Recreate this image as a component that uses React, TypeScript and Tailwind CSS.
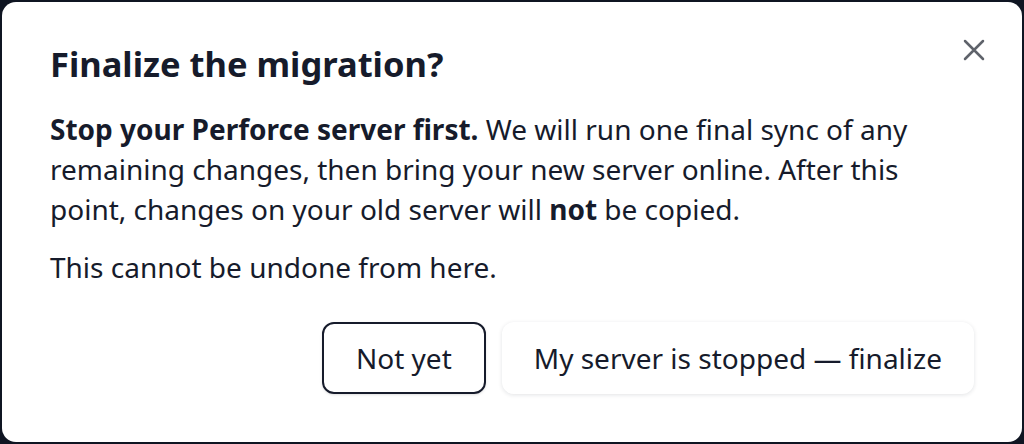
import React from "react";

const CloseIcon = () => (
  <svg width="22" height="22" viewBox="0 0 22 22" fill="none">
    <path
      d="M2 2L20 20M20 2L2 20"
      stroke="currentColor"
      strokeWidth="2.5"
      strokeLinecap="round"
    />
  </svg>
);

export default function App() {
  return (
    <div
      className="w-[1024px] h-[444px] bg-[#0f1522] p-[2px] flex"
      style={{ fontFamily: "'Noto Sans', 'Open Sans', sans-serif" }}
    >
      <div className="relative flex-1 bg-white rounded-[14px] px-[48px] pt-[38px] text-[#161b2b]">
        <button className="absolute top-[37px] right-[37px] text-[#5f636b]">
          <CloseIcon />
        </button>
        <h2 className="text-[34.5px] font-bold leading-[48px]">
          Finalize the migration?
        </h2>
        <p className="mt-[21px] text-[28px] leading-[40px]">
          <strong className="font-bold">Stop your Perforce server first.</strong>{" "}
          We will run one final sync of any remaining changes, then bring your
          new server online. After this point, changes on your old server will{" "}
          <strong className="font-bold">not</strong> be copied.
        </p>
        <p className="mt-[18px] text-[28px] leading-[40px]">
          This cannot be undone from here.
        </p>
        <div className="mt-[35px] flex justify-end gap-4">
          <button className="h-[72px] px-[32px] rounded-[12px] border-2 border-[#161b2b] text-[28px] shadow-sm">
            Not yet
          </button>
          <button className="h-[72px] px-[32px] rounded-[12px] bg-white text-[28px] shadow-[0_1px_4px_rgba(15,23,42,0.12)]">
            My server is stopped — finalize
          </button>
        </div>
      </div>
    </div>
  );
}
